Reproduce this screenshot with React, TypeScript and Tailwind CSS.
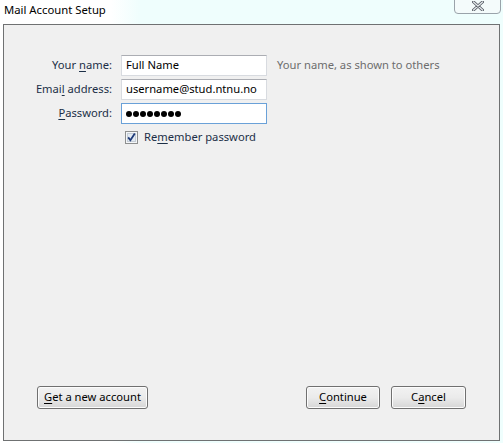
const font = "font-['Segoe_UI','Noto_Sans','Open_Sans',sans-serif]";

function U({ children }: { children: string }) {
  return <span className="underline underline-offset-2">{children}</span>;
}

function Field({ value, focused, password }: { value: string; focused?: boolean; password?: boolean }) {
  return (
    <div
      className={`flex h-[21px] w-[146px] items-center border bg-white px-[4px] text-[11.2px] text-black ${
        focused ? "border-[#6aa1d8]" : "border-[#d8dbe0] border-t-[#abadb3]"
      }`}
    >
      {password ? (
        <span className="flex gap-[1px]">
          {Array.from({ length: 8 }).map((_, i) => (
            <span key={i} className="h-[6px] w-[6px] rounded-full bg-black" />
          ))}
        </span>
      ) : (
        value
      )}
    </div>
  );
}

function WinButton({ children, w }: { children: React.ReactNode; w: string }) {
  return (
    <button
      className={`${w} h-[23px] rounded-[3px] border border-[#707070] bg-gradient-to-b from-[#f2f2f2] via-[#ebebeb] to-[#d6d6d6] text-[11.2px] text-black shadow-[inset_0_0_0_1px_#fcfcfc]`}
    >
      {children}
    </button>
  );
}

export default function App() {
  return (
    <div className={`relative flex h-[443px] w-[503px] flex-col bg-gradient-to-r from-white from-[22%] to-[#effefd] to-[28%] ${font}`}>
      {/* title bar */}
      <div className="flex h-[24px] items-start pl-[4px] pt-[2px] text-[11.3px] text-black">Mail Account Setup</div>
      <div className="absolute right-[2px] top-[-2px] flex h-[16px] w-[47px] items-center justify-center rounded-b-[4px] border border-[#9aa3aa] bg-[#f4fbfb]">
        <svg width="12" height="10" viewBox="0 0 12 10">
          <path d="M1.5 1 L10.5 9 M10.5 1 L1.5 9" stroke="#5a6068" strokeWidth="3" strokeLinecap="round" />
          <path d="M1.5 1 L10.5 9 M10.5 1 L1.5 9" stroke="#e8ecef" strokeWidth="1.2" strokeLinecap="round" />
        </svg>
      </div>

      {/* panel */}
      <div className="mx-[3px] mb-[2px] flex flex-1 flex-col border border-[#6f7172] bg-[#f0f0f0] pt-[30px]">
        <div className="grid grid-cols-[108px_146px_auto] items-center gap-x-[9px] gap-y-[3px] text-[11.2px] text-[#1c2f47]">
          <div className="text-right">
            Your <U>n</U>ame:
          </div>
          <Field value="Full Name" />
          <div className="pl-[1px] text-[#6d6d6d]">Your name, as shown to others</div>

          <div className="text-right">
            Emai<U>l</U> address:
          </div>
          <Field value="username@stud.ntnu.no" />
          <div />

          <div className="text-right">
            <U>P</U>assword:
          </div>
          <Field value="" password focused />
          <div />
        </div>

        <div className="mt-[5px] flex items-center gap-[6px] pl-[121px] text-[11.2px] text-[#1c2f47]">
          <svg width="13" height="13" viewBox="0 0 13 13">
            <rect x="0.5" y="0.5" width="12" height="12" fill="#f4f6f8" stroke="#8e8f8f" />
            <rect x="2.5" y="2.5" width="8" height="8" fill="#e3eaf2" stroke="#c5cdd6" />
            <path d="M3.2 6.4 L5.4 9.2 L9.8 2.6" fill="none" stroke="#1e3a78" strokeWidth="1.8" />
          </svg>
          <span>
            Re<U>m</U>ember password
          </span>
        </div>

        <div className="flex-1" />

        <div className="flex items-center pb-[31px] pl-[33px] pr-[33px]">
          <WinButton w="w-[111px]">
            <U>G</U>et a new account
          </WinButton>
          <div className="flex-1" />
          <WinButton w="w-[74px]">
            <U>C</U>ontinue
          </WinButton>
          <div className="w-[11px]" />
          <WinButton w="w-[75px]">
            C<U>a</U>ncel
          </WinButton>
        </div>
      </div>
    </div>
  );
}
